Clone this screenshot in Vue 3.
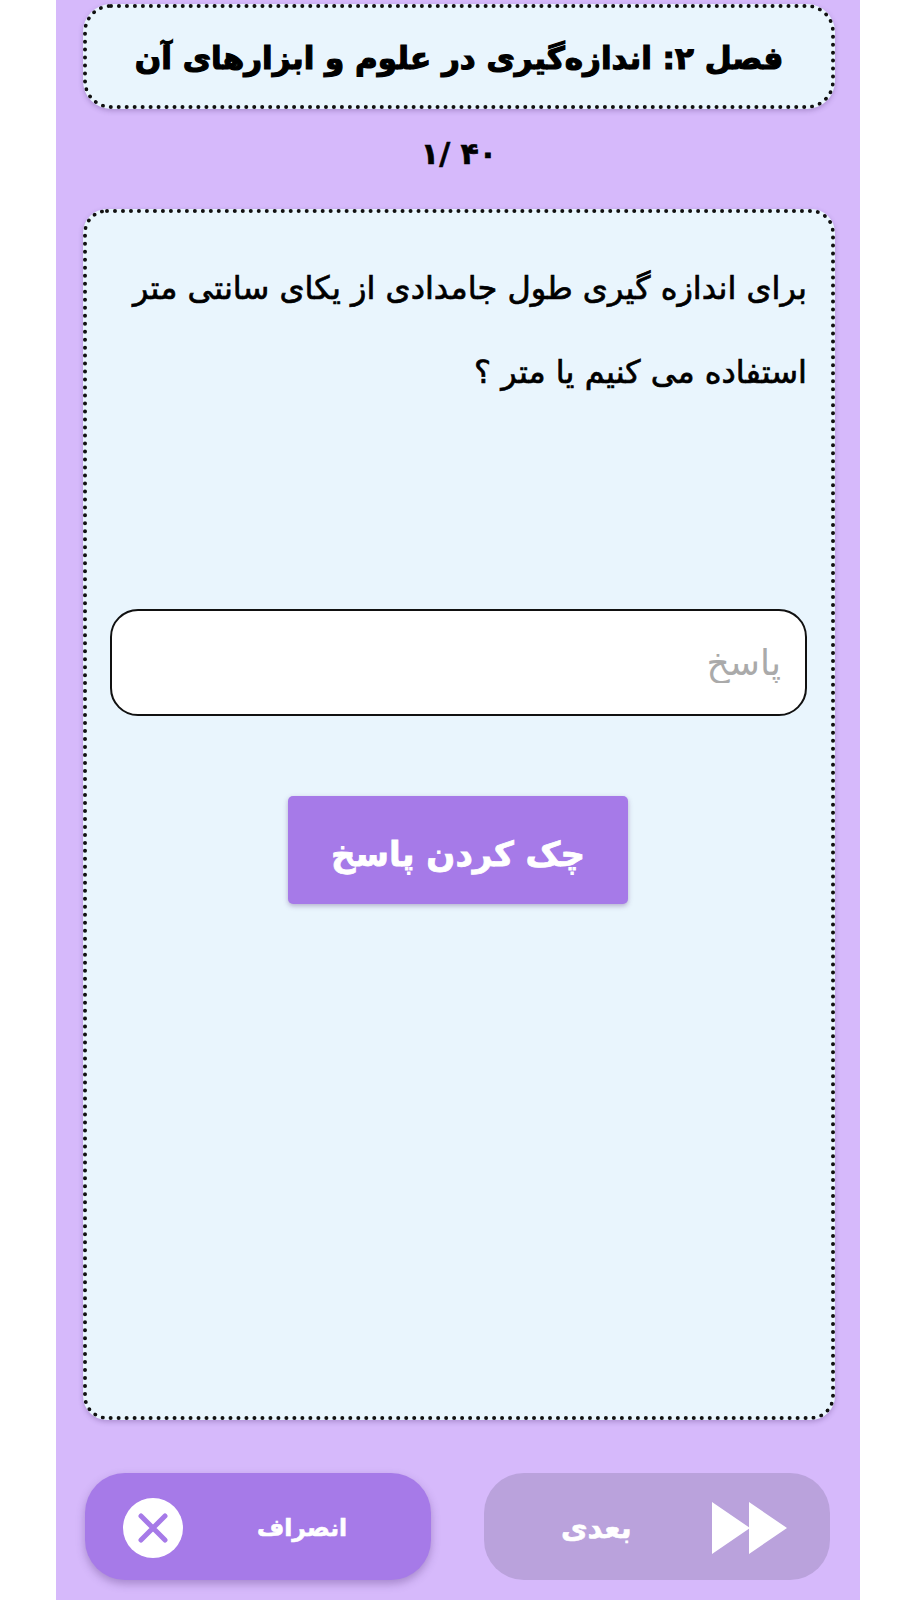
<script setup>
const title = 'فصل ۲: اندازه‌گیری در علوم و ابزارهای آن'
const question = 'برای اندازه گیری طول جامدادی از یکای سانتی متر استفاده می کنیم یا متر ؟'
</script>

<template>
  <main class="phone" dir="rtl">
    <header class="card title-card">
      <h1>{{ title }}</h1>
    </header>
    <p class="counter" dir="ltr">۱/ ۴۰</p>
    <section class="card question-card">
      <p class="question">{{ question }}</p>
      <input class="answer" type="text" placeholder="پاسخ" />
      <button class="check" type="button">چک کردن پاسخ</button>
    </section>
    <footer class="actions" dir="ltr">
      <button class="action cancel" type="button">
        <svg class="icon" viewBox="0 0 60 60" aria-hidden="true">
          <circle cx="30" cy="30" r="30" fill="#fff" />
          <path d="M18 18 42 42M42 18 18 42" stroke="#a67ae8" stroke-width="5" stroke-linecap="round" />
        </svg>
        <span class="label">انصراف</span>
      </button>
      <button class="action next" type="button" disabled>
        <span class="label">بعدی</span>
        <svg class="icon-next" viewBox="0 0 75 52" aria-hidden="true">
          <path d="M0 0 38 26 0 52ZM37 0 75 26 37 52Z" fill="#fff" />
        </svg>
      </button>
    </footer>
  </main>
</template>

<style scoped>
.phone {
  box-sizing: border-box;
  width: 804px;
  height: 1600px;
  margin-left: 56px;
  padding: 4px 25px 0 27px;
  background: #d6b9fb;
  display: flex;
  flex-direction: column;
  font-family: "DejaVu Sans", "Noto Sans", sans-serif;
  overflow: hidden;
}
.card {
  box-sizing: border-box;
  background: #e9f5fd;
  border: 4px dotted #111;
  box-shadow: 0 2px 5px rgba(80, 50, 120, 0.3);
}
.title-card {
  height: 105px;
  border-radius: 28px;
  padding-top: 2px;
  display: flex;
  align-items: center;
  justify-content: center;
}
h1 {
  margin: 0;
  font-size: 31px;
  font-weight: 700;
  color: #000;
  -webkit-text-stroke: 1.2px #000;
}
.counter {
  box-sizing: border-box;
  height: 100px;
  margin: 0;
  padding-bottom: 12px;
  display: flex;
  align-items: center;
  justify-content: center;
  font-size: 30px;
  font-weight: 700;
  color: #000;
  -webkit-text-stroke: 0.6px #000;
}
.question-card {
  height: 1211px;
  border-radius: 24px;
  padding: 33px 24px 0 22px;
  display: flex;
  flex-direction: column;
}
.question {
  margin: 0;
  height: 363px;
  font-size: 32px;
  line-height: 84px;
  color: #000;
  -webkit-text-stroke: 0.7px #000;
}
.answer {
  box-sizing: border-box;
  width: 697px;
  height: 107px;
  padding: 0 24px;
  flex: none;
  background: #fff;
  border: 2.5px solid #111;
  border-radius: 28px;
  font-family: inherit;
  font-size: 36px;
  outline: none;
}
.answer::placeholder {
  color: #aaa;
}
.check {
  align-self: center;
  width: 340px;
  height: 108px;
  margin-top: 80px;
  padding-top: 8px;
  border: 0;
  border-radius: 5px;
  background: #a67ae8;
  box-shadow: 0 2px 5px rgba(80, 50, 120, 0.35);
  color: #fff;
  font-family: inherit;
  font-size: 34px;
  font-weight: 700;
  -webkit-text-stroke: 0.8px #fff;
}
.actions {
  display: flex;
  justify-content: space-between;
  margin-top: 53px;
  padding: 0 5px 0 2px;
}
.action {
  box-sizing: border-box;
  width: 346px;
  height: 107px;
  padding-top: 3px;
  border: 0;
  border-radius: 40px;
  display: flex;
  align-items: center;
  color: #fff;
  font-family: inherit;
  font-weight: 700;
  -webkit-text-stroke: 0.6px #fff;
}
.cancel {
  background: #a67ae8;
  box-shadow: 0 4px 8px rgba(80, 50, 120, 0.35);
  padding-left: 38px;
  font-size: 23.5px;
}
.cancel .label {
  margin-left: 74px;
}
.next {
  background: #baa2dc;
  padding-left: 77px;
  font-size: 29px;
}
.next .label {
  margin-right: 80px;
}
.icon {
  width: 60px;
  height: 60px;
}
.icon-next {
  width: 75px;
  height: 52px;
}
</style>

<style>
body {
  background: #fff;
}
</style>
